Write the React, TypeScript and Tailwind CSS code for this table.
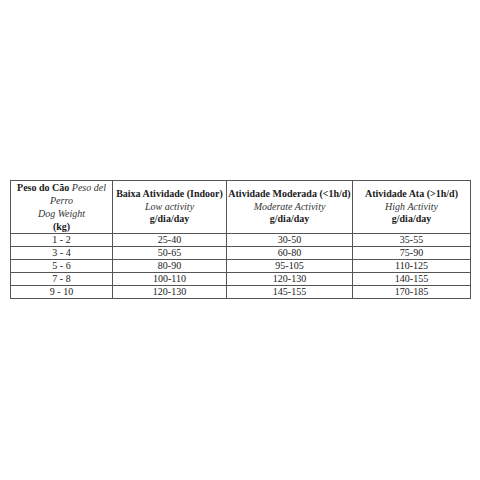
import React from 'react'

const rows = [
  ['1 - 2', '25-40', '30-50', '35-55'],
  ['3 - 4', '50-65', '60-80', '75-90'],
  ['5 - 6', '80-90', '95-105', '110-125'],
  ['7 - 8', '100-110', '120-130', '140-155'],
  ['9 - 10', '120-130', '145-155', '170-185'],
]

const headers = [
  { pt: 'Baixa Atividade (Indoor)', en: 'Low activity' },
  { pt: 'Atividade Moderada (<1h/d)', en: 'Moderate Activity' },
  { pt: 'Atividade Ata (>1h/d)', en: 'High Activity' },
]

export default function App() {
  return (
    <div
      className="w-[480px] h-[480px] bg-white pt-[180px] pl-[10px] text-[#1a1a1a]"
      style={{ fontFamily: '"Liberation Serif", "Times New Roman", serif' }}
    >
      <table className="border-collapse text-[10px] w-[461px] table-fixed">
        <colgroup>
          <col className="w-[102px]" />
          <col className="w-[114px]" />
          <col className="w-[126px]" />
          <col className="w-[118px]" />
        </colgroup>
        <thead>
          <tr className="h-[52px]">
            <th className="border border-[#555] font-normal text-center align-middle leading-[13px] px-1">
              <span className="font-bold">Peso do Cão</span> <i className="text-[#333]">Peso del Perro</i>
              <br />
              <i className="text-[#333]">Dog Weight</i>
              <br />
              <span className="font-bold">(kg)</span>
            </th>
            {headers.map((h) => (
              <th
                key={h.pt}
                className="border border-[#555] font-normal text-center align-middle leading-[12.5px] whitespace-nowrap"
              >
                <div className="font-bold">{h.pt}</div>
                <div className="italic text-[#333]">{h.en}</div>
                <div className="font-bold">g/dia/day</div>
              </th>
            ))}
          </tr>
        </thead>
        <tbody>
          {rows.map((r) => (
            <tr key={r[0]} className="h-[13px]">
              {r.map((c, i) => (
                <td key={i} className="border border-[#555] text-center leading-[11.5px] p-0">
                  {c}
                </td>
              ))}
            </tr>
          ))}
        </tbody>
      </table>
    </div>
  )
}
